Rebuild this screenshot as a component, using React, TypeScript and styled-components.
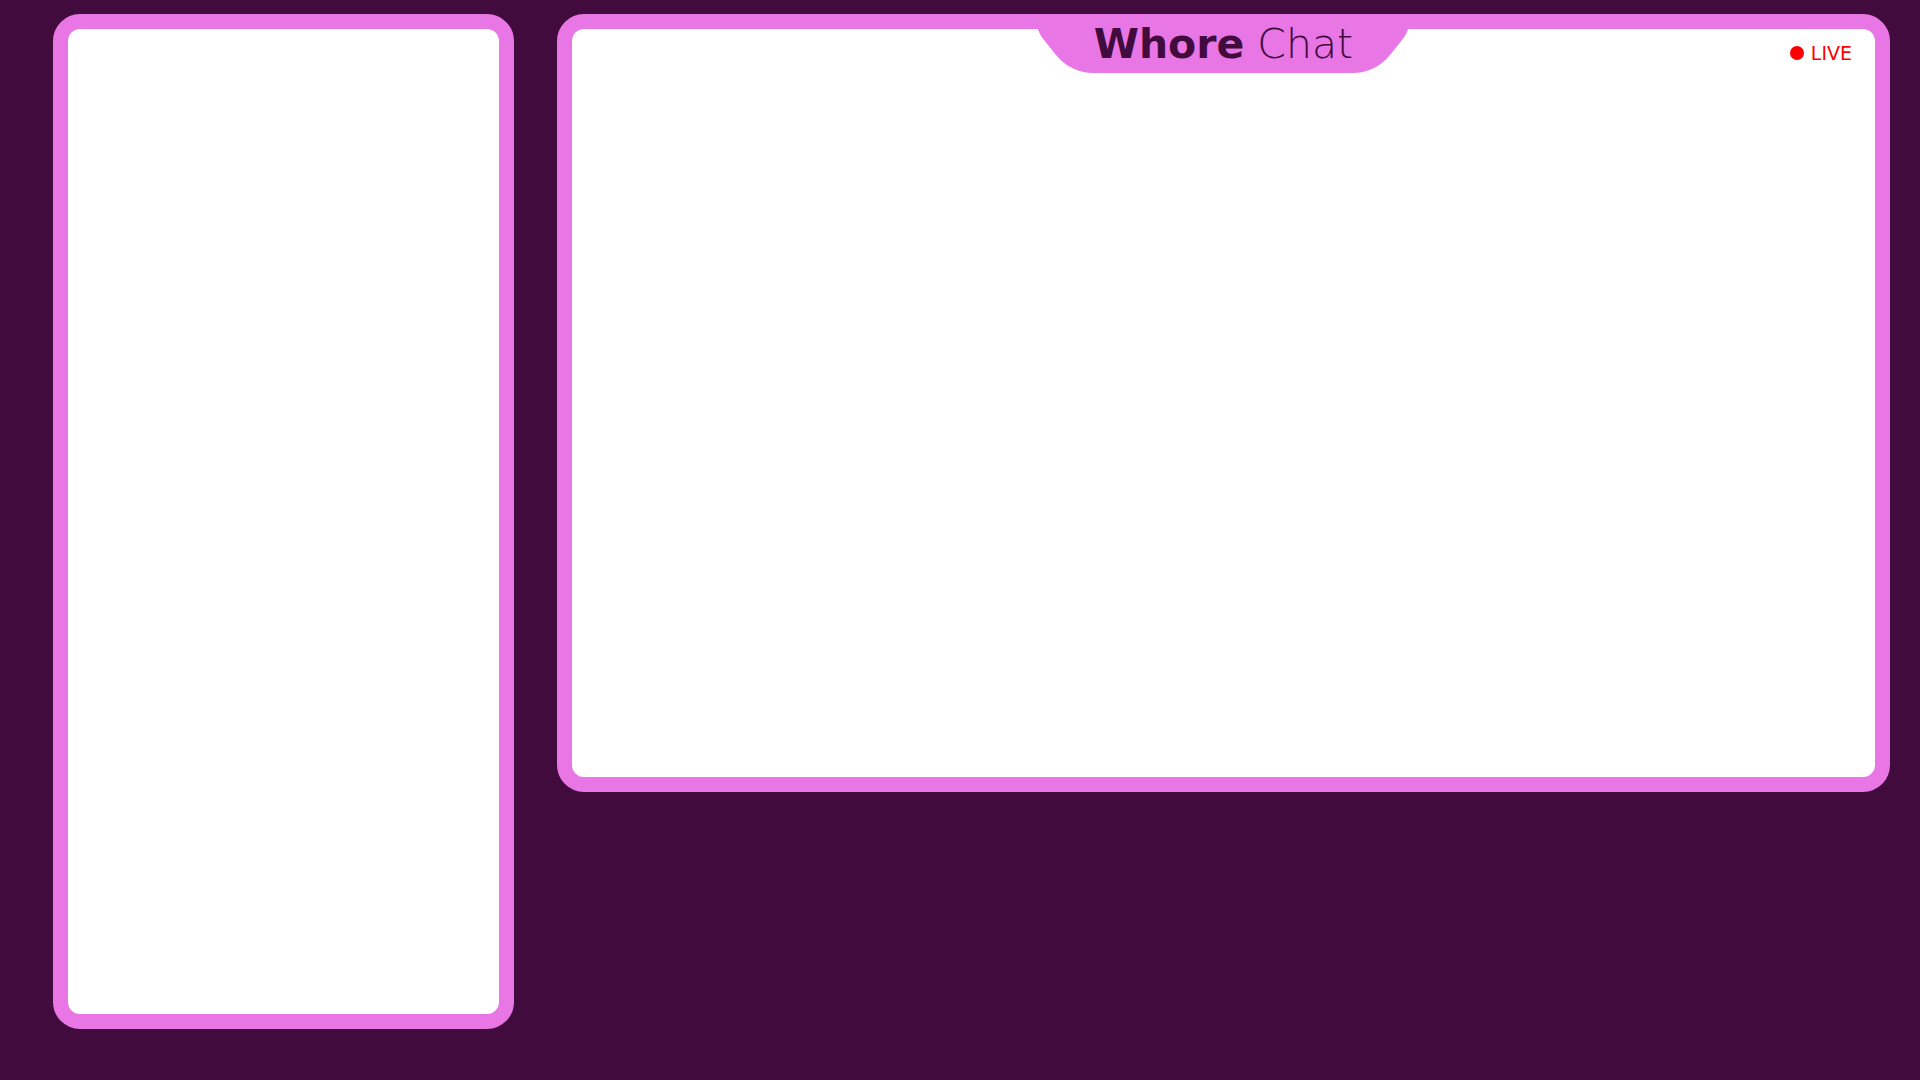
import styled, { createGlobalStyle } from "styled-components";

const GlobalStyle = createGlobalStyle`
  *, *::before, *::after { box-sizing: border-box; }
  body {
    margin: 0;
    background: #420b3e;
    color: #420b3e;
    font-family: "DejaVu Sans", "Noto Sans", sans-serif;
  }
`;

const Layout = styled.div`
  display: grid;
  grid-template-columns: 24vw 1fr;
  gap: 43px;
  align-items: start;
  min-height: 100vh;
  padding: 14px 30px 0 53px;
`;

const Panel = styled.section<{ $height: string }>`
  height: ${(p) => p.$height};
  background: #fff;
  border: 15px solid #e876e4;
  border-radius: 27px;
`;

const Header = styled.header`
  display: grid;
  grid-template-columns: 1fr 370px 1fr;
  align-items: start;
`;

const Tab = styled.div`
  grid-column: 2;
  position: relative;
  height: 44px;
`;

const TabShape = styled.svg`
  position: absolute;
  inset: 0;
  width: 100%;
  height: 100%;
  fill: #e876e4;
`;

const Title = styled.h1`
  position: relative;
  margin: 0;
  font-size: 41px;
  line-height: 30px;
  font-weight: 200;
  text-align: center;
  white-space: nowrap;

  strong { font-weight: 700; }
`;

const Live = styled.div`
  display: flex;
  align-items: center;
  justify-content: flex-end;
  gap: 7px;
  padding: 12px 23px 0 0;
  color: #f00;
  font-size: 19px;
  line-height: 24px;
`;

const Dot = styled.span`
  width: 14px;
  height: 14px;
  border-radius: 50%;
  background: #f00;
`;

export default function App() {
  return (
    <>
      <GlobalStyle />
      <Layout>
        <Panel as="aside" $height="94vh" />
        <Panel as="main" $height="72vh">
          <Header>
            <Tab>
              <TabShape viewBox="0 0 370 44" aria-hidden="true">
                <path d="M0 0C1 4 3 7 6 11L18 26C28 38 41 44 56 44H314C329 44 342 38 352 26L364 11C367 7 369 4 370 0Z" />
              </TabShape>
              <Title>
                <strong>Whore</strong> Chat
              </Title>
            </Tab>
            <Live>
              <Dot />
              LIVE
            </Live>
          </Header>
        </Panel>
      </Layout>
    </>
  );
}
